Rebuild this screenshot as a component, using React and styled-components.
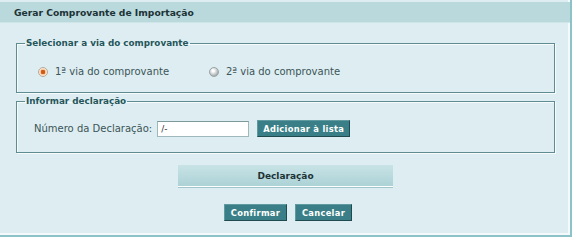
import React from "react";
import styled, { createGlobalStyle } from "styled-components";

const Global = createGlobalStyle`
  html, body { margin: 0; padding: 0; background: #ffffff; }
  body { font-family: "DejaVu Sans", Verdana, sans-serif; }
`;

const Frame = styled.div`
  width: 570px;
  height: 235px;
  background: #deedf1;
  border-right: 2px solid #8cc3c8;
  border-bottom: 2px solid #8cc3c8;
  box-shadow: inset -2px -2px 0 #f4fafb;
  display: flex;
  flex-direction: column;
  box-sizing: content-box;
`;

const Header = styled.div`
  margin-top: 2px;
  height: 20px;
  background: #b9d9dd;
  border-bottom: 1px solid #cfe6e9;
  display: flex;
  align-items: center;
  padding-left: 14px;
  font-size: 9.2px;
  font-weight: bold;
  color: #1d3336;
`;

const Body = styled.div`
  padding: 15px 15px 0 16px;
  display: flex;
  flex-direction: column;
`;

const Fieldset = styled.fieldset`
  margin: 0 0 ${(p) => p.$mb || 0}px 0;
  padding: 0;
  height: ${(p) => p.$h}px;
  box-sizing: border-box;
  border: 1px solid #5f8c90;
  box-shadow: 1px 1px 0 #f7fbfc, inset 1px 1px 0 #f7fbfc;
`;

const Legend = styled.legend`
  font-size: 8.8px;
  font-weight: bold;
  color: #24565b;
  padding: 0 1px;
  margin-left: 8px;
  line-height: 10px;
`;

const RadioRow = styled.div`
  display: flex;
  align-items: center;
  padding: 18px 0 0 21px;
`;

const RadioItem = styled.label`
  display: flex;
  align-items: center;
  width: ${(p) => p.$w}px;
  font-size: 10px;
  color: #3b5558;
`;

const RadioDot = styled.span`
  width: 10px;
  height: 10px;
  border-radius: 50%;
  margin-right: 7px;
  box-sizing: border-box;
  background: ${(p) =>
    p.$on
      ? "radial-gradient(circle at 50% 50%, #d35a1a 0 2px, #f3c9a0 2.5px, #fbeee0 4px)"
      : "radial-gradient(circle at 40% 35%, #ffffff 0 1px, #d4d8d8 3px, #a9b0b1 5px)"};
  border: 1px solid ${(p) => (p.$on ? "#b8a898" : "#9aa3a4")};
`;

const DeclRow = styled.div`
  display: flex;
  align-items: center;
  padding: 14px 0 0 17px;
`;

const Label = styled.span`
  font-size: 10px;
  color: #3b5558;
  margin-right: 5px;
`;

const Input = styled.input`
  width: 92px;
  height: 16px;
  box-sizing: border-box;
  border: 1px solid #9fb8bb;
  border-top-color: #7e999c;
  background: #fff;
  font-family: "DejaVu Sans", Verdana, sans-serif;
  font-size: 9px;
  color: #333;
  padding: 0 3px;
  margin-right: 8px;
`;

const Button = styled.button`
  height: 17px;
  width: ${(p) => p.$w}px;
  padding: 0;
  background: #3a7f87;
  color: #ffffff;
  font-family: "DejaVu Sans", Verdana, sans-serif;
  font-size: 8.3px;
  font-weight: bold;
  border: 1px solid #5f9aa0;
  border-right-color: #1f4a4f;
  border-bottom-color: #1f4a4f;
  cursor: pointer;
  letter-spacing: 0.3px;
`;

const SectionBar = styled.div`
  margin-top: 12px;
  margin-left: 162px;
  width: 215px;
  height: 21px;
  background: linear-gradient(#c8e3e6, #acd2d6);
  border-bottom: 1px solid #ffffff;
  box-shadow: 0 1px 0 #9fc6ca;
  display: flex;
  align-items: center;
  justify-content: center;
  font-size: 9px;
  font-weight: bold;
  color: #1d3336;
`;

const Actions = styled.div`
  display: flex;
  gap: 8px;
  margin-top: 17px;
  padding-left: 208px;
`;

export default function App() {
  return (
    <>
      <Global />
      <Frame>
        <Header>Gerar Comprovante de Importação</Header>
        <Body>
          <Fieldset $h={55} $mb={3}>
            <Legend>Selecionar a via do comprovante</Legend>
            <RadioRow>
              <RadioItem $w={171}>
                <RadioDot $on />
                1ª via do comprovante
              </RadioItem>
              <RadioItem $w={200}>
                <RadioDot />
                2ª via do comprovante
              </RadioItem>
            </RadioRow>
          </Fieldset>
          <Fieldset $h={57}>
            <Legend>Informar declaração</Legend>
            <DeclRow>
              <Label>Número da Declaração:</Label>
              <Input defaultValue="/-" />
              <Button $w={93}>Adicionar à lista</Button>
            </DeclRow>
          </Fieldset>
          <SectionBar>Declaração</SectionBar>
          <Actions>
            <Button $w={63}>Confirmar</Button>
            <Button $w={57}>Cancelar</Button>
          </Actions>
        </Body>
      </Frame>
    </>
  );
}
